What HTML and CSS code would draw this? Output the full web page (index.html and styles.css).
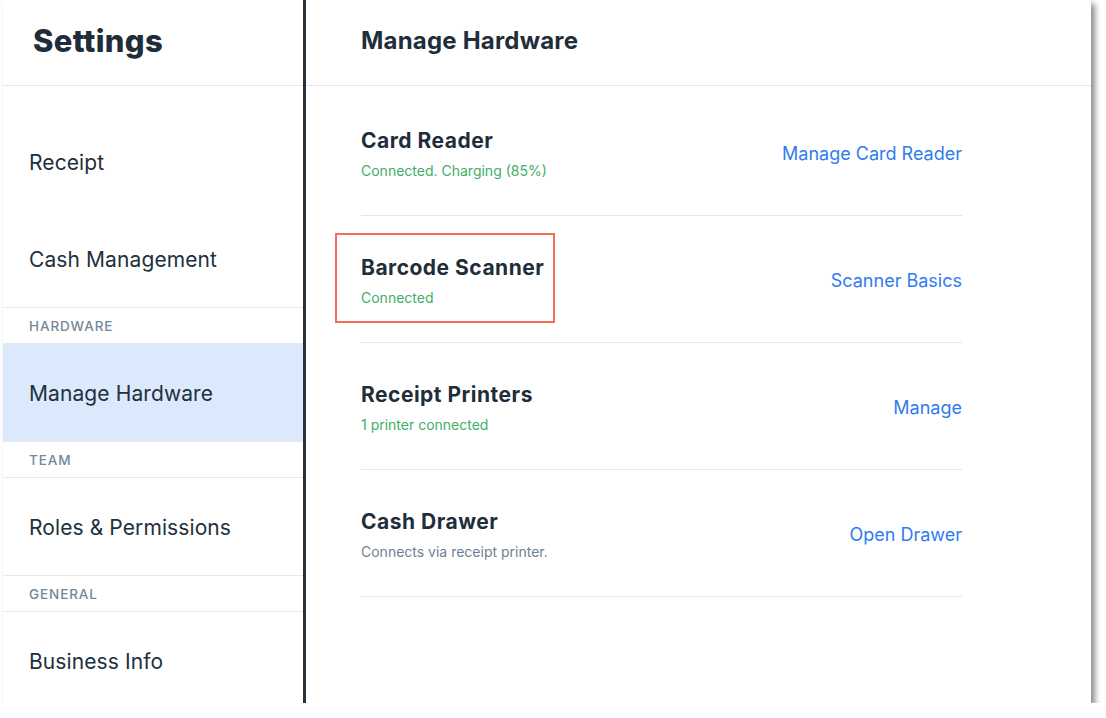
FILE: index.html
```html
<!DOCTYPE html>
<html lang="en">
<head>
  <meta charset="UTF-8">
  <meta name="viewport" content="width=device-width, initial-scale=1.0">
  <title>Settings - Manage Hardware</title>
  <link rel="stylesheet" href="styles.css">
</head>
<body>
  <div class="frame">
    <aside class="sidebar">
      <div class="sidebar-head">
        <h1>Settings</h1>
      </div>
      <nav class="nav">
        <div class="nav-item">Receipt</div>
        <div class="nav-item">Cash Management</div>
        <div class="nav-label">Hardware</div>
        <div class="nav-item active">Manage Hardware</div>
        <div class="nav-label">Team</div>
        <div class="nav-item">Roles &amp; Permissions</div>
        <div class="nav-label">General</div>
        <div class="nav-item">Business Info</div>
      </nav>
    </aside>

    <main class="main">
      <div class="main-head">
        <h2>Manage Hardware</h2>
      </div>
      <div class="rows">
        <div class="row">
          <div class="row-info">
            <div class="row-title">Card Reader</div>
            <div class="row-status ok">Connected. Charging (85%)</div>
          </div>
          <a class="row-link">Manage Card Reader</a>
        </div>
        <div class="row">
          <div class="row-info">
            <div class="row-title">Barcode Scanner</div>
            <div class="row-status ok">Connected</div>
          </div>
          <a class="row-link">Scanner Basics</a>
          <div class="callout"></div>
        </div>
        <div class="row">
          <div class="row-info">
            <div class="row-title">Receipt Printers</div>
            <div class="row-status ok">1 printer connected</div>
          </div>
          <a class="row-link">Manage</a>
        </div>
        <div class="row">
          <div class="row-info">
            <div class="row-title">Cash Drawer</div>
            <div class="row-status">Connects via receipt printer.</div>
          </div>
          <a class="row-link">Open Drawer</a>
        </div>
      </div>
    </main>
  </div>
</body>
</html>
```

FILE: styles.css
```css
body {
  margin: 0;
  background: #fff;
  font-family: Inter, "Noto Sans", sans-serif;
  color: #22303d;
}
.frame {
  display: flex;
  width: 1088px;
  height: 703px;
  margin-left: 3px;
  background: #fff;
  box-shadow: 4px 4px 6px rgba(0,0,0,0.45);
  overflow: hidden;
}
.sidebar {
  width: 300px;
  flex: none;
  border-right: 3px solid #26333f;
}
.sidebar-head {
  height: 81px;
  padding-bottom: 4px;
  border-bottom: 1px solid #e1e7ed;
  display: flex;
  align-items: center;
  padding-left: 30px;
}
h1 {
  margin: 0;
  font-size: 31px;
  font-weight: 800;
  letter-spacing: 0.3px;
  color: #1f2e3b;
}
.nav {
  padding-top: 27px;
}
.nav-item {
  box-sizing: border-box;
  height: 97px;
  padding-top: 2px;
  display: flex;
  align-items: center;
  padding-left: 26px;
  font-size: 21px;
  letter-spacing: 0.1px;
  color: #22303d;
}
.nav-item.active {
  background: #dce8fb;
}
.nav-label {
  height: 35px;
  border-top: 1px solid #e4e9ee;
  border-bottom: 1px solid #e4e9ee;
  display: flex;
  align-items: center;
  padding-left: 26px;
  font-size: 13.5px;
  font-weight: 500;
  text-transform: uppercase;
  letter-spacing: 0.9px;
  color: #74879a;
}
.main {
  flex: 1;
}
.main-head {
  height: 81px;
  padding-bottom: 4px;
  border-bottom: 1px solid #e1e7ed;
  display: flex;
  align-items: center;
  padding-left: 55px;
}
h2 {
  margin: 0;
  font-size: 24px;
  font-weight: 700;
  letter-spacing: 0.2px;
  color: #1f2e3b;
}
.rows {
  padding: 3px 129px 0 55px;
}
.row {
  position: relative;
  height: 126px;
  border-bottom: 1px solid #e3e6ea;
  display: flex;
  align-items: center;
  justify-content: space-between;
}
.row-info {
  display: flex;
  flex-direction: column;
  gap: 9px;
  padding-top: 2px;
}
.row-title {
  font-size: 21px;
  font-weight: 700;
  letter-spacing: 0.5px;
  color: #1f2e3b;
}
.row-status {
  font-size: 14px;
  color: #6f8092;
}
.row-status.ok {
  color: #3fae68;
}
.row-link {
  font-size: 18px;
  color: #2f7cf0;
  cursor: pointer;
  padding-top: 2px;
}
.callout {
  position: absolute;
  left: -26px;
  top: 17px;
  width: 216px;
  height: 86px;
  border: 2.5px solid #f26f55;
}
```
